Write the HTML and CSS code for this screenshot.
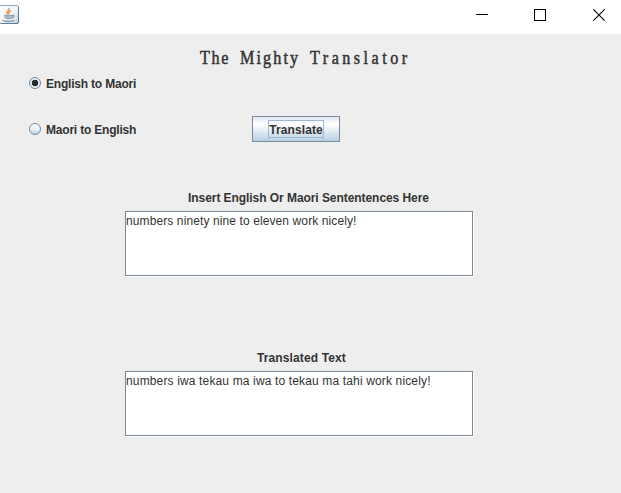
FILE: index.html
```html
<!DOCTYPE html>
<html lang="en">
<head>
<meta charset="utf-8">
<title>The Mighty Translator</title>
<link rel="stylesheet" href="styles.css">
</head>
<body>
<header class="titlebar">
  <svg class="app-icon" width="19" height="20" viewBox="0 0 19 20">
    <defs><linearGradient id="tile" x1="0" y1="0" x2="1" y2="1"><stop offset="0" stop-color="#fff"/><stop offset=".55" stop-color="#f2f3f5"/><stop offset="1" stop-color="#c3ced8"/></linearGradient></defs>
    <rect x="-.5" y=".5" width="19" height="18" rx="1.5" fill="url(#tile)" stroke="#8fa5b5"/>
    <path d="M18.500 2v15q0 1.500-1.500 1.500H1" fill="none" stroke="#5d7d92"/>
    <path d="M9 3c.7 2.500-3.500 3.500-1.500 6.500M11 5.500c-3 1.500-2.500 2.500-1.700 4" fill="none" stroke="#ee9a58" stroke-width="1.600"/>
    <path d="M4 10h8l-.5 3.500q-3.500 1.500-6.500 0z" fill="#8ba3b6"/>
    <path d="M5 12h6" stroke="#c9d5df"/>
    <path d="M12 10.500c2.500-.5 2 2-.5 2.500M2.500 15.500c2 1.300 9 1.300 11.500 0" fill="none" stroke="#6e8ea8" stroke-width="1.200"/>
  </svg>
  <nav class="controls">
    <svg width="12" height="12" viewBox="0 0 12 12"><path d="M0 5.500h12" stroke="#000"/></svg>
    <svg width="12" height="12" viewBox="0 0 12 12"><rect x=".5" y=".5" width="11" height="11" fill="none" stroke="#000"/></svg>
    <svg width="12" height="12" viewBox="0 0 12 12"><path d="M.3.3l11.400 11.400M11.700.3.3 11.700" stroke="#000" stroke-width="1.100"/></svg>
  </nav>
</header>
<main>
  <h1><span class="w1">The</span> <span class="w2">Mighty</span> <span class="w3">Translator</span></h1>
  <div class="option"><i class="radio checked"></i><span>English to Maori</span></div>
  <div class="row">
    <div class="option"><i class="radio"></i><span>Maori to English</span></div>
    <button class="translate"><span>Translate</span></button>
  </div>
  <section class="source">
    <h2>Insert English Or Maori Sententences Here</h2>
    <div class="area">numbers ninety nine to eleven work nicely!</div>
  </section>
  <section class="result">
    <h2>Translated Text</h2>
    <div class="area">numbers iwa tekau ma iwa to tekau ma tahi work nicely!</div>
  </section>
</main>
</body>
</html>
```
FILE: styles.css
```css
* { box-sizing: border-box; }
body {
  margin: 0;
  width: 621px;
  height: 493px;
  overflow: hidden;
  background: #eee;
  color: #333;
  font: bold 12px/14px "Liberation Sans", Arial, sans-serif;
}
svg { display: block; }
.titlebar {
  display: flex;
  justify-content: space-between;
  height: 34px;
  padding: 5px 16px 0 0;
  background: #fff;
}
.controls { display: flex; gap: 46px; padding-top: 4px; }
.controls svg:last-child { margin-left: 1px; }
h1 {
  display: flex;
  height: 24px;
  margin: 12px 0 0 200px;
  font: 400 19px/24px "Liberation Serif", serif;
  -webkit-text-stroke: .5px #333;
  white-space: nowrap;
  transform: scaleX(.85);
  transform-origin: left;
}
.w1 { width: 47px; letter-spacing: 2px; }
.w2 { width: 82.400px; letter-spacing: 2.500px; }
.w3 { letter-spacing: 4.100px; }
.option {
  display: flex;
  align-items: flex-start;
  gap: 5px;
  width: 252px;
  height: 14px;
  padding-left: 29px;
  margin-top: 7px;
  letter-spacing: -.2px;
  white-space: nowrap;
}
.radio {
  width: 12px;
  height: 12px;
  border: 1px solid #71899e;
  border-radius: 50%;
  background: linear-gradient(#fff, #edf3f8 50%, #bdd2e5);
}
.checked { background: radial-gradient(circle, #292929 0 2.900px, #e4edf5 3.600px); }
.row { display: flex; height: 26px; margin-top: 25px; }
.row .option { margin-top: 7px; }
.translate {
  width: 88px;
  height: 26px;
  padding: 0;
  border: 1px solid #7a8a99;
  background: linear-gradient(#dde8f3, #fff 30%, #dce7f1 65%, #b8cfe5);
  color: #333;
  font: inherit;
}
.translate span {
  display: block;
  width: 56px;
  height: 18px;
  margin: 0 auto;
  border: 1px solid #a3b8cc;
  line-height: 18px;
  letter-spacing: .1px;
}
section { width: 348px; margin-left: 125px; }
.source { margin-top: 49px; }
.result { margin-top: 75px; }
h2 { margin: 0 0 6px; font: inherit; white-space: nowrap; }
.source h2 { padding-left: 63px; letter-spacing: -.06px; }
.result h2 { padding-left: 132px; letter-spacing: .12px; }
.area {
  height: 65px;
  border: 1px solid #7a8a99;
  background: #fff;
  box-shadow: 1px 1px #fff;
  padding: 2px 0 0;
  font-weight: 400;
  white-space: nowrap;
}
.source .area { letter-spacing: .105px; }
.result .area { letter-spacing: .145px; }
```
